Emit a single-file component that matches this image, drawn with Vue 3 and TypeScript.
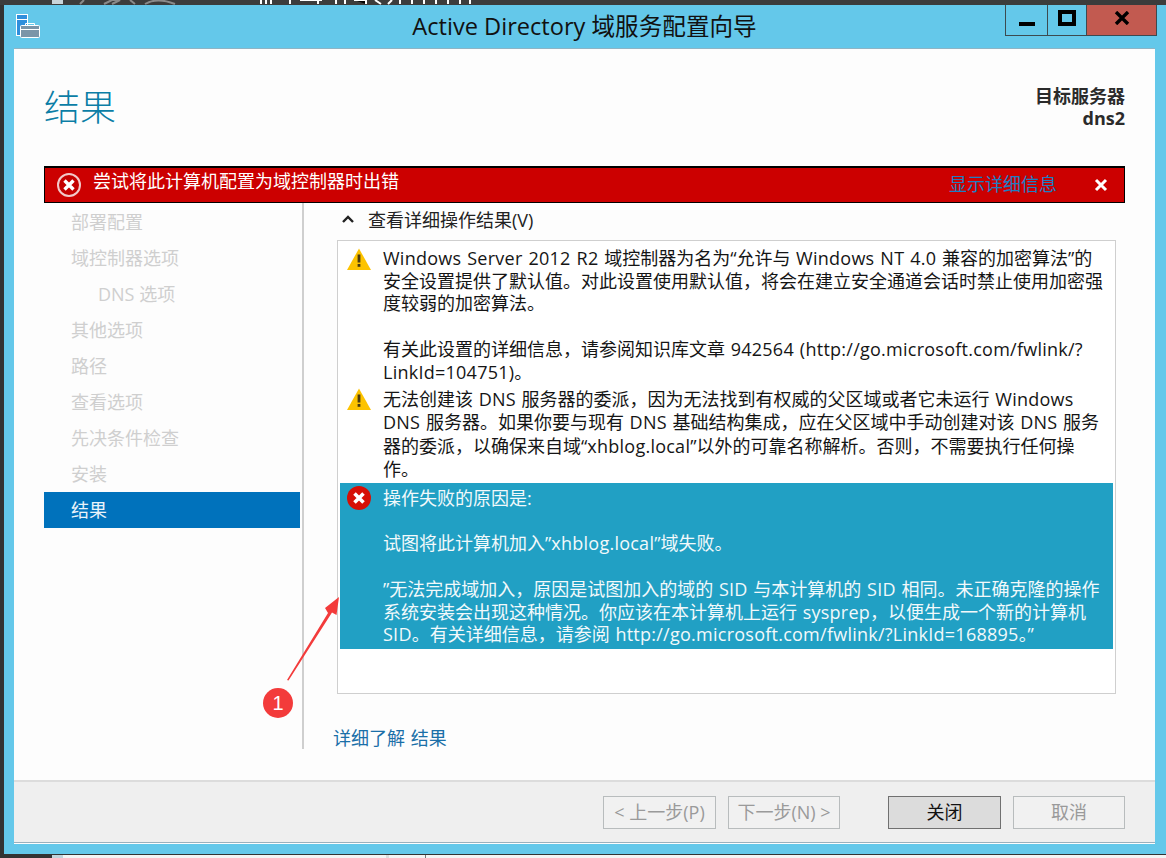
<script setup lang="ts">
const steps = [
  { label: '部署配置' },
  { label: '域控制器选项' },
  { label: 'DNS 选项', sub: true },
  { label: '其他选项' },
  { label: '路径' },
  { label: '查看选项' },
  { label: '先决条件检查' },
  { label: '安装' },
  { label: '结果', active: true },
]
</script>

<template>
  <div class="screen">
    <div class="top-strip">
      <svg class="peek-top" width="500" height="5" viewBox="0 0 500 5">
        <rect x="52" y="0" width="11" height="4" fill="#c8d4da" />
        <path d="M80 4l4-4M104 4l8-4h8l-8 4M130 0l5 4M145 4q12-7 30 0" fill="none" stroke="#8a8a8a" stroke-width="2" />
        <path d="M261 0v4M266 0v4M271 0v4M290 0v4M300 0h22M318 0v4M336 0v4M345 0v4M354 0h12v4M375 0l6 4M392 0l-4 4M400 0v4M412 0v4M424 0v4M436 0v4M448 0v4M460 0v4M470 0v4" stroke="#fff" stroke-width="2" />
      </svg>
    </div>
    <div class="window">
      <header class="titlebar">
        <svg class="app-icon" width="24" height="25" viewBox="0 0 24 25">
          <rect x="0.5" y="0.5" width="11" height="21" fill="#2f8fdc" stroke="#fff" />
          <rect x="1" y="5" width="10" height="1" fill="#fff" />
          <rect x="4.5" y="11.5" width="19" height="12" rx="1" fill="#7b95a8" stroke="#fff" />
          <path d="M9.5 11V9.5h9V11" fill="none" stroke="#fff" />
          <path d="M5 15.5h18" stroke="#fff" />
        </svg>
        <h1 class="title">Active Directory 域服务配置向导</h1>
        <div class="win-btns">
          <div class="wb wb-min"><span class="min-bar"></span></div>
          <div class="wb wb-max"><span class="max-box"></span></div>
          <div class="wb wb-close">
            <svg width="16" height="14" viewBox="0 0 16 14"><path d="M2 1l12 12M14 1L2 13" stroke="#000" stroke-width="3.4" /></svg>
          </div>
        </div>
      </header>

      <main class="client">
        <section class="head">
          <h2 class="page-title">结果</h2>
          <div class="target">目标服务器<br />dns2</div>
        </section>

        <section class="errorbar">
          <svg class="err-ico" width="26" height="26" viewBox="0 0 26 26">
            <circle cx="13" cy="13" r="11" fill="#c40000" stroke="#f2c9c9" stroke-width="2" />
            <path d="M8.5 8.5l9 9M17.5 8.5l-9 9" stroke="#fff" stroke-width="3.4" />
          </svg>
          <span class="err-text">尝试将此计算机配置为域控制器时出错</span>
          <a class="err-link">显示详细信息</a>
          <svg class="err-x" width="14" height="14" viewBox="0 0 14 14"><path d="M2 2l10 10M12 2L2 12" stroke="#fff" stroke-width="3" /></svg>
        </section>

        <section class="body">
          <nav class="sidebar">
            <div v-for="s in steps" :key="s.label" class="step" :class="{ sub: s.sub, active: s.active }">{{ s.label }}</div>
          </nav>

          <div class="content">
            <div class="details-head">
              <svg width="12" height="8" viewBox="0 0 12 8"><path d="M1 7l5-5 5 5" fill="none" stroke="#222" stroke-width="2.4" /></svg>
              <span>查看详细操作结果(V)</span>
            </div>
            <div class="results">
              <div class="row first">
                <svg class="tri" width="24" height="22" viewBox="0 0 24 22">
                  <path d="M12 0.5L24 22H0z" fill="#fdc300" />
                  <rect x="10.6" y="6.5" width="2.8" height="8" fill="#4a3b10" />
                  <rect x="10.6" y="16" width="2.8" height="2.8" fill="#4a3b10" />
                </svg>
                <div class="msg"><span class="lat">Windows Server 2012 R2</span> 域控制器为名为“允许与 <span class="lat">Windows NT 4.0</span> 兼容的加密算法”的安全设置提供了默认值。对此设置使用默认值，将会在建立安全通道会话时禁止使用加密强度较弱的加密算法。<br /><br />有关此设置的详细信息，请参阅知识库文章 <span class="lat">942564 (http://go.microsoft.com/fwlink/?LinkId=104751)</span>。</div>
              </div>
              <div class="row second">
                <svg class="tri" width="24" height="22" viewBox="0 0 24 22">
                  <path d="M12 0.5L24 22H0z" fill="#fdc300" />
                  <rect x="10.6" y="6.5" width="2.8" height="8" fill="#4a3b10" />
                  <rect x="10.6" y="16" width="2.8" height="2.8" fill="#4a3b10" />
                </svg>
                <div class="msg">无法创建该 <span class="lat">DNS</span> 服务器的委派，因为无法找到有权威的父区域或者它未运行 <span class="lat">Windows DNS</span> 服务器。如果你要与现有 <span class="lat">DNS</span> 基础结构集成，应在父区域中手动创建对该 <span class="lat">DNS</span> 服务器的委派，以确保来自域“<span class="lat">xhblog.local</span>”以外的可靠名称解析。否则，不需要执行任何操作。</div>
              </div>
              <div class="row selected">
                <svg class="cross" width="24" height="24" viewBox="0 0 24 24">
                  <circle cx="12" cy="12" r="12" fill="#d60f05" />
                  <path d="M7.5 7.5l9 9M16.5 7.5l-9 9" stroke="#fff" stroke-width="3.6" />
                </svg>
                <div class="msg">操作失败的原因是:<br /><br />试图将此计算机加入”<span class="lat">xhblog.local</span>”域失败。<br /><br />”无法完成域加入，原因是试图加入的域的 <span class="lat">SID</span> 与本计算机的 <span class="lat">SID</span> 相同。未正确克隆的操作系统安装会出现这种情况。你应该在本计算机上运行 <span class="lat">sysprep</span>，以便生成一个新的计算机 <span class="lat">SID</span>。有关详细信息，请参阅 <span class="lat">http://go.microsoft.com/fwlink/?LinkId=168895</span>。”</div>
              </div>
            </div>
            <a class="more">详细了解 结果</a>
          </div>
        </section>

        <footer class="footer">
          <button class="btn off prev">&lt; 上一步(P)</button>
          <button class="btn off next">下一步(N) &gt;</button>
          <button class="btn primary">关闭</button>
          <button class="btn off cancel">取消</button>
        </footer>
      </main>

      <svg class="arrow" width="60" height="90" viewBox="0 0 60 90">
        <path d="M0 85L41 18L38 13L52 2L49.5 20L45 17.5L1.5 85.5z" fill="#f33b3b" />
      </svg>
      <div class="badge">1</div>
    </div>
    <div class="bottom-strip">
      <span class="peek"><span class="peek-a"></span><span class="peek-b"></span><span class="peek-c"></span></span>
    </div>
  </div>
</template>

<style>
html, body { margin: 0; padding: 0; background: #3a3a3a; }
</style>

<style scoped>
.screen {
  width: 1166px;
  height: 858px;
  overflow: hidden;
  background: #333;
  font-family: "Open Sans", "Noto Sans CJK SC", sans-serif;
  display: flex;
  flex-direction: column;
}
.top-strip { height: 5px; flex: none; background: #3c3c3c; position: relative; overflow: hidden; }
.peek-top { position: absolute; left: 0; top: 0; }
.window {
  position: relative;
  flex: none;
  height: 849px;
  margin-left: 4px;
  background: #64c8ea;
  padding: 0 11px 10px 10px;
  box-sizing: border-box;
  display: flex;
  flex-direction: column;
}
.titlebar {
  flex: none;
  height: 43px;
  position: relative;
  display: flex;
  align-items: flex-start;
}
.app-icon { position: absolute; left: 2px; top: 9px; }
.title {
  margin: 0;
  width: 100%;
  text-align: center;
  font-size: 23.6px;
  font-weight: 400;
  line-height: 42px;
  color: #111;
}
.win-btns {
  position: absolute;
  right: -2px;
  top: 0;
  height: 31px;
  display: flex;
}
.wb {
  box-sizing: border-box;
  height: 31px;
  border: 1px solid #3c4a50;
  border-top: 0;
  display: flex;
  align-items: center;
  justify-content: center;
}
.wb-min { width: 42px; border-right: 0; }
.wb-max { width: 39px; border-right: 0; }
.wb-close { width: 71px; background: #c25a50; }
.min-bar { width: 16px; height: 4px; background: #000; margin-top: 8px; }
.max-box { width: 18px; height: 16px; box-sizing: border-box; border: 4px solid #000; margin-top: -4px; }
.wb-close svg { margin-top: -4px; }
.client {
  flex: 1;
  min-height: 0;
  background: #fdfdfd;
  border-top: 1px solid #8fb4c4;
  box-sizing: border-box;
  display: flex;
  flex-direction: column;
}
.head {
  flex: none;
  height: 117px;
  padding: 0 30px;
  display: flex;
  justify-content: space-between;
  align-items: flex-start;
}
.page-title {
  margin: 35px 0 0;
  font-size: 36px;
  font-weight: 300;
  line-height: 48px;
  color: #0b7ea6;
}
.target {
  margin-top: 36px;
  text-align: right;
  font-size: 18px;
  line-height: 22px;
  font-weight: 700;
  color: #2b2b2b;
}
.errorbar {
  flex: none;
  margin: 0 30px;
  height: 37px;
  box-sizing: border-box;
  border: 1px solid #000;
  border-top-width: 2px;
  background: #cc0000;
  display: flex;
  align-items: center;
  color: #fff;
  font-size: 18px;
  padding-left: 11px;
}
.err-text { margin-left: 11px; margin-top: -11px; }
.err-link { margin-left: auto; color: #1c7fc4; margin-top: -5px; }
.err-x { margin-left: 37px; margin-right: 16px; }
.body {
  flex: none;
  height: 577px;
  padding-left: 30px;
  display: flex;
}
.sidebar {
  flex: none;
  width: 258px;
  height: 546px;
  box-sizing: border-box;
  padding-top: 1px;
  font-size: 18px;
  color: #cfcfcf;
}
.step {
  height: 36px;
  line-height: 36px;
  padding-left: 27px;
  width: 256px;
  box-sizing: border-box;
}
.step.sub { padding-left: 54px; }
.step.active { background: #0072bc; color: #e9f3fa; }
.content {
  width: 822px;
  height: 546px;
  border-left: 2px solid #cfcfcf;
  box-sizing: border-box;
  padding-left: 33px;
  display: flex;
  flex-direction: column;
}
.details-head {
  height: 37px;
  flex: none;
  box-sizing: border-box;
  padding: 0 0 6px 5px;
  display: flex;
  align-items: center;
  gap: 14px;
  font-size: 18px;
  color: #222;
}
.results {
  width: 779px;
  height: 454px;
  flex: none;
  box-sizing: border-box;
  border: 1px solid #cfcfcf;
  padding: 2px 2px 0 2px;
  background: #fff;
}
.row {
  position: relative;
  padding: 4px 4px 0 43px;
  font-size: 18px;
  line-height: 22.7px;
  color: #151515;
}
.second { padding-top: 5px; padding-bottom: 2px; line-height: 23.2px; }
.tri { position: absolute; left: 7px; top: 5px; }
.cross { position: absolute; left: 7px; top: 3px; }
.selected { background: #21a0c4; color: #f2f9fb; height: 166px; box-sizing: border-box; }
.msg { word-break: break-word; word-spacing: 1px; }
.lat { letter-spacing: 0.25px; }
.more {
  margin: 32px 0 0 -4px;
  font-size: 18px;
  line-height: 24px;
  word-spacing: 1px;
  color: #1a6fa8;
}
.footer {
  flex: none;
  height: 63px;
  background: #efefef;
  border-top: 2px solid #dcdcdc;
  border-bottom: 1px solid #9ab0bd;
  box-sizing: border-box;
  padding: 14px 30px 0 0;
  display: flex;
  justify-content: flex-end;
  align-items: flex-start;
}
.btn {
  width: 113px;
  height: 33px;
  padding: 0;
  box-sizing: border-box;
  font-family: inherit;
  font-size: 18px;
  line-height: 29px;
  background: #f1f1f1;
  border: 1px solid #b8bcbd;
  color: #9a9a9a;
}
.prev { margin-right: 12px; }
.next { width: 112px; margin-right: 48px; }
.cancel { width: 112px; }
.primary { background: #dcdcdc; border-color: #707070; color: #111; margin-right: 12px; }
.arrow { position: absolute; left: 283px; top: 590px; }
.badge {
  position: absolute;
  left: 259px;
  top: 683px;
  width: 30px;
  height: 30px;
  border-radius: 50%;
  background: #f33b3b;
  color: #fff;
  text-align: center;
  font-size: 20px;
  line-height: 30px;
  font-family: "Liberation Sans", sans-serif;
}
.bottom-strip { flex: 1; background: #333; position: relative; }
.peek { position: absolute; left: 52px; right: 0; top: 1px; height: 3px; background: #f4f4f4; }
.peek-a { position: absolute; left: 0; top: 0; width: 11px; height: 3px; background: #c2d4dc; }
.peek-b { position: absolute; left: 334px; top: 0; width: 3px; height: 3px; background: #ddd; }
.peek-c { position: absolute; left: 373px; top: 0; width: 1px; height: 3px; background: #777; }
</style>
